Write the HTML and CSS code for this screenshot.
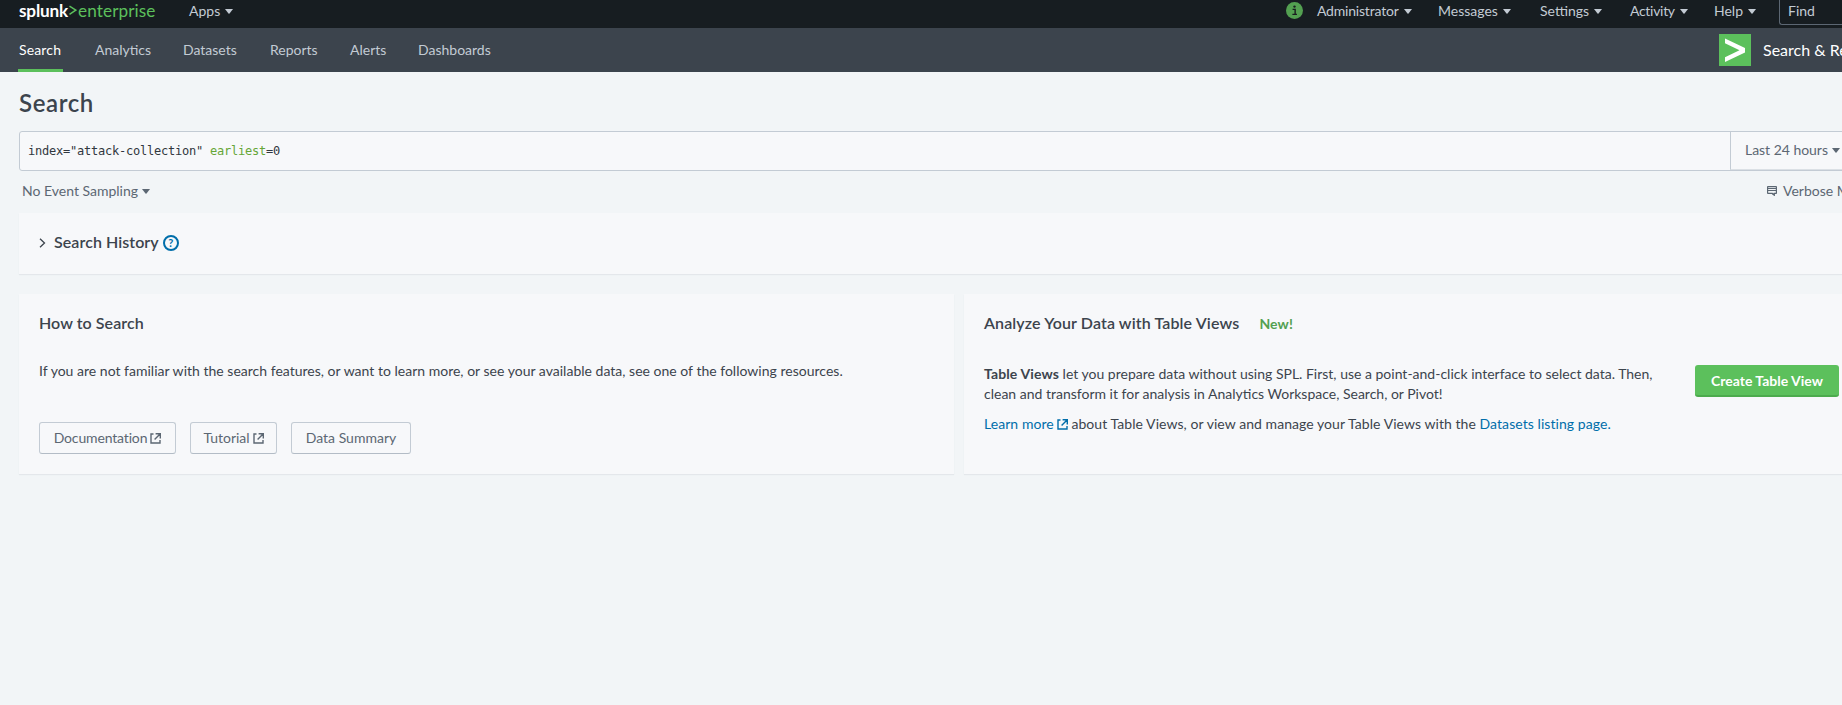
FILE: index.html
```html
<!DOCTYPE html>
<html lang="en">
<head>
<meta charset="utf-8">
<title>Search | Splunk</title>
<link rel="stylesheet" href="styles.css">
</head>
<body>
<svg class="defs" width="0" height="0">
  <symbol id="external" viewBox="0 0 11 11"><path d="M3.500 1H1v9h9V7M5.600 .7H10.300v4.700M10 1 4.600 6.400" fill="none" stroke="currentColor" stroke-width="1.400"/></symbol>
  <symbol id="caret" viewBox="0 0 8 5"><path d="M0 0h8L4.500 4.600a.7.7 0 0 1-1 0z" fill="currentColor"/></symbol>
</svg>
<header class="topbar">
  <a class="logo"><b>splunk</b><svg class="logo-mark" viewBox="0 0 8 11"><path d="M.5 1.200 6.800 5.200.500 9.300" fill="none" stroke="currentColor" stroke-width="1.500"/></svg><span>enterprise</span></a>
  <a class="top-item apps">Apps<svg class="caret"><use href="#caret"/></svg></a>
  <nav class="top-right">
    <svg class="info" viewBox="0 0 16 16"><circle cx="8" cy="8" r="8" fill="#53a051"/><path d="M6.200 6.900h2.400v4.400M6 11.700h4.300" fill="none" stroke="#1a1c20" stroke-width="1.300"/><circle cx="8" cy="4.300" r="1.100" fill="#1a1c20"/></svg>
    <a class="top-item admin">Administrator<svg class="caret"><use href="#caret"/></svg></a>
    <a class="top-item messages">Messages<svg class="caret"><use href="#caret"/></svg></a>
    <a class="top-item settings">Settings<svg class="caret"><use href="#caret"/></svg></a>
    <a class="top-item activity">Activity<svg class="caret"><use href="#caret"/></svg></a>
    <a class="top-item help">Help<svg class="caret"><use href="#caret"/></svg></a>
    <div class="find">Find</div>
  </nav>
</header>
<nav class="appbar">
  <a class="tab active">Search</a>
  <a class="tab">Analytics</a>
  <a class="tab">Datasets</a>
  <a class="tab">Reports</a>
  <a class="tab">Alerts</a>
  <a class="tab">Dashboards</a>
  <div class="app-name">
    <svg class="app-icon" viewBox="0 0 32 32"><path fill="#5cc05c" d="M0 0h32v32H0z"/><path fill="#fff" d="M6 4.500 26 14v4.500L6 28v-4.800L20.500 16.300 6 9.300z"/></svg>
    <span>Search &amp; Reporting</span>
  </div>
</nav>
<main class="page">
  <h1 class="title">Search</h1>
  <div class="searchbar">
    <div class="query">index="attack-collection" <span class="keyword">earliest</span>=0</div>
    <div class="timerange">Last 24 hours<svg class="caret"><use href="#caret"/></svg></div>
  </div>
  <div class="options">
    <span>No Event Sampling<svg class="caret"><use href="#caret"/></svg></span>
    <span class="mode"><svg class="mode-icon" viewBox="0 0 10 10"><path d="M1 .6h8a.4.4 0 0 1 .4.4v6a.4.4 0 0 1-.4.4H7.300v2L5.300 7.400H1A.4.4 0 0 1 .6 7V1A.4.4 0 0 1 1 .6z" fill="none" stroke="currentColor" stroke-width="1.200"/><path d="M1 2.500h8M1 4.500h8M5 8h2.500" stroke="currentColor"/></svg>Verbose Mode</span>
  </div>
  <section class="panel history">
    <svg class="chevron" viewBox="0 0 7 10"><path d="M1 .7 5.500 5 1 9.300" fill="none" stroke="currentColor" stroke-width="1.300"/></svg>
    <h2>Search History</h2>
    <span class="hint">?</span>
  </section>
  <div class="columns">
    <section class="panel howto">
      <h2>How to Search</h2>
      <p>If you are not familiar with the search features, or want to learn more, or see your available data, see one of the following resources.</p>
      <div class="buttons">
        <a class="btn docs">Documentation<svg class="ext"><use href="#external"/></svg></a>
        <a class="btn tutorial">Tutorial<svg class="ext"><use href="#external"/></svg></a>
        <a class="btn summary">Data Summary</a>
      </div>
    </section>
    <section class="panel tables">
      <h2>Analyze Your Data with Table Views <span class="new">New!</span></h2>
      <div class="tables-body">
        <div class="tables-text">
          <p><b>Table Views</b> let you prepare data without using SPL. First, use a point-and-click interface to select data. Then,<br>clean and transform it for analysis in Analytics Workspace, Search, or Pivot!</p>
          <p class="links"><a>Learn more<svg class="ext"><use href="#external"/></svg></a> about Table Views, or view and manage your Table Views with the <a>Datasets listing page.</a></p>
        </div>
        <a class="btn-primary">Create Table View</a>
      </div>
    </section>
  </div>
</main>
</body>
</html>
```
FILE: styles.css
```css
* { box-sizing: border-box; }
body {
  margin: 0;
  height: 705px;
  overflow: hidden;
  background: #f2f5f7;
  color: #3c444d;
  font: 14px/20px Lato, "Open Sans", sans-serif;
  white-space: nowrap;
}
h1, h2, p { margin: 0; }
.defs { display: block; }
.caret { width: 8px; height: 5px; margin-left: 4px; vertical-align: 2px; }

.topbar {
  display: flex;
  height: 28px;
  padding-left: 19px;
  background: #171d21;
  color: #c3cbd4;
}
.logo { display: flex; width: 169px; height: 21px; font-size: 17.2px; line-height: 21px; color: #5cc05c; }
.logo b { width: 50px; color: #fff; letter-spacing: -.2px; }
.logo-mark { width: 8px; height: 11px; margin: 5px 1px 0 0; }
.logo span { letter-spacing: .1px; }
.top-item { height: 21px; line-height: 21px; }
.apps { padding-left: 1px; }
.apps .caret { margin-left: 5px; }
.top-right { display: flex; width: 556px; margin-left: auto; flex: none; }
.info { width: 17px; height: 17px; margin: 2px 14px 0 0; }
.admin { width: 121px; letter-spacing: -.2px; }
.messages { width: 102px; }
.settings { width: 90px; }
.activity { width: 84px; letter-spacing: -.3px; }
.help { width: 65px; }
.top-right .caret { margin-left: 5px; }
.find {
  flex: 1;
  height: 25px;
  margin-right: -4px;
  padding-left: 8px;
  line-height: 21px;
  border: 1px solid #5c6773;
  border-width: 0 0 1px 1px;
  border-radius: 0 0 0 3px;
}

.appbar {
  display: grid;
  grid-template-columns: 76px 88px 87px 80px 68px 1fr auto;
  height: 44px;
  padding-left: 19px;
  background: #3c444d;
  color: #c3cbd4;
  line-height: 43px;
}
.tab { height: 44px; }
.tab.active { justify-self: start; width: 45px; margin-left: -1px; padding-left: 1px; letter-spacing: .15px; color: #fff; box-shadow: inset 0 -3px #5cc05c; }
.app-name { display: flex; width: 123px; overflow: hidden; color: #fff; font-size: 16px; }
.app-icon { flex: none; width: 32px; height: 32px; margin: 6px 12px 0 0; }

.page { padding: 17px 0 0 19px; }
.title { font-size: 24px; line-height: 28px; font-weight: 600; letter-spacing: .6px; }
.searchbar {
  display: flex;
  height: 40px;
  margin: 14px -4px 0 0;
  border: 1px solid #c3cbd4;
  border-radius: 3px;
  background: #f7f8fa;
}
.query {
  flex: 1;
  padding-left: 8px;
  font: 12px/38px "DejaVu Sans Mono", monospace;
  letter-spacing: -.225px;
  color: #31373e;
  white-space: pre;
}
.keyword { color: #65a637; }
.timerange { width: 115px; padding-left: 14px; line-height: 36px; letter-spacing: -.03px; border-left: 1px solid #c3cbd4; border-bottom: 1px solid #dbe0e5; color: #5c6773; }
.options { display: flex; justify-content: space-between; height: 42px; padding-left: 3px; line-height: 40px; color: #5c6773; }
.mode { width: 75px; overflow: hidden; }
.mode-icon { width: 10px; height: 10px; margin-right: 6px; vertical-align: 0; }

.panel { background: #f7f8fa; box-shadow: 0 1px 1px rgba(60, 80, 100, .08); }
h2 { font-size: 16px; line-height: 20px; font-weight: 600; letter-spacing: .07px; }
.tables h2 { letter-spacing: .12px; }
.history { display: flex; height: 61px; padding: 19px 0 0 20px; }
.chevron { width: 7px; height: 10px; margin: 6px 8px 0 0; }
.hint {
  width: 16px;
  height: 16px;
  margin: 3px 0 0 4px;
  border: 2px solid #006eaa;
  border-radius: 50%;
  color: #006eaa;
  font-size: 11px;
  font-weight: 700;
  line-height: 12px;
  text-align: center;
}
.columns { display: grid; grid-template-columns: 935px 1fr; gap: 10px; height: 180px; margin-top: 20px; }
.howto, .tables { padding: 19px 0 0 20px; }
.howto p { margin-top: 28px; letter-spacing: .012px; }
.buttons { display: flex; margin-top: 41px; }
.btn {
  height: 32px;
  margin-right: 14px;
  border: 1px solid #c3cbd4;
  border-bottom-color: #b3bcc6;
  border-radius: 3px;
  line-height: 29px;
  text-align: center;
  color: #5c6773;
}
.docs { width: 137px; letter-spacing: -.15px; }
.tutorial { width: 87px; }
.summary { width: 120px; }
.ext { width: 11px; height: 11px; margin-left: 3px; vertical-align: -1px; }
.new { margin-left: 16px; font-size: 14px; font-weight: 700; color: #53a051; }
.tables-body { display: flex; justify-content: space-between; padding-right: 3px; margin-top: 31px; }
.tables-text { margin-top: -1px; }
.tables-text b { letter-spacing: .12px; }
.links { margin-top: 10px; letter-spacing: .06px; }
.links a { color: #006eaa; }
.btn-primary {
  width: 144px;
  height: 32px;
  border-radius: 3px;
  border-bottom: 2px solid #4cab4d;
  background: #5cc05c;
  color: #fff;
  font-weight: 700;
  line-height: 31px;
  text-align: center;
}
```
